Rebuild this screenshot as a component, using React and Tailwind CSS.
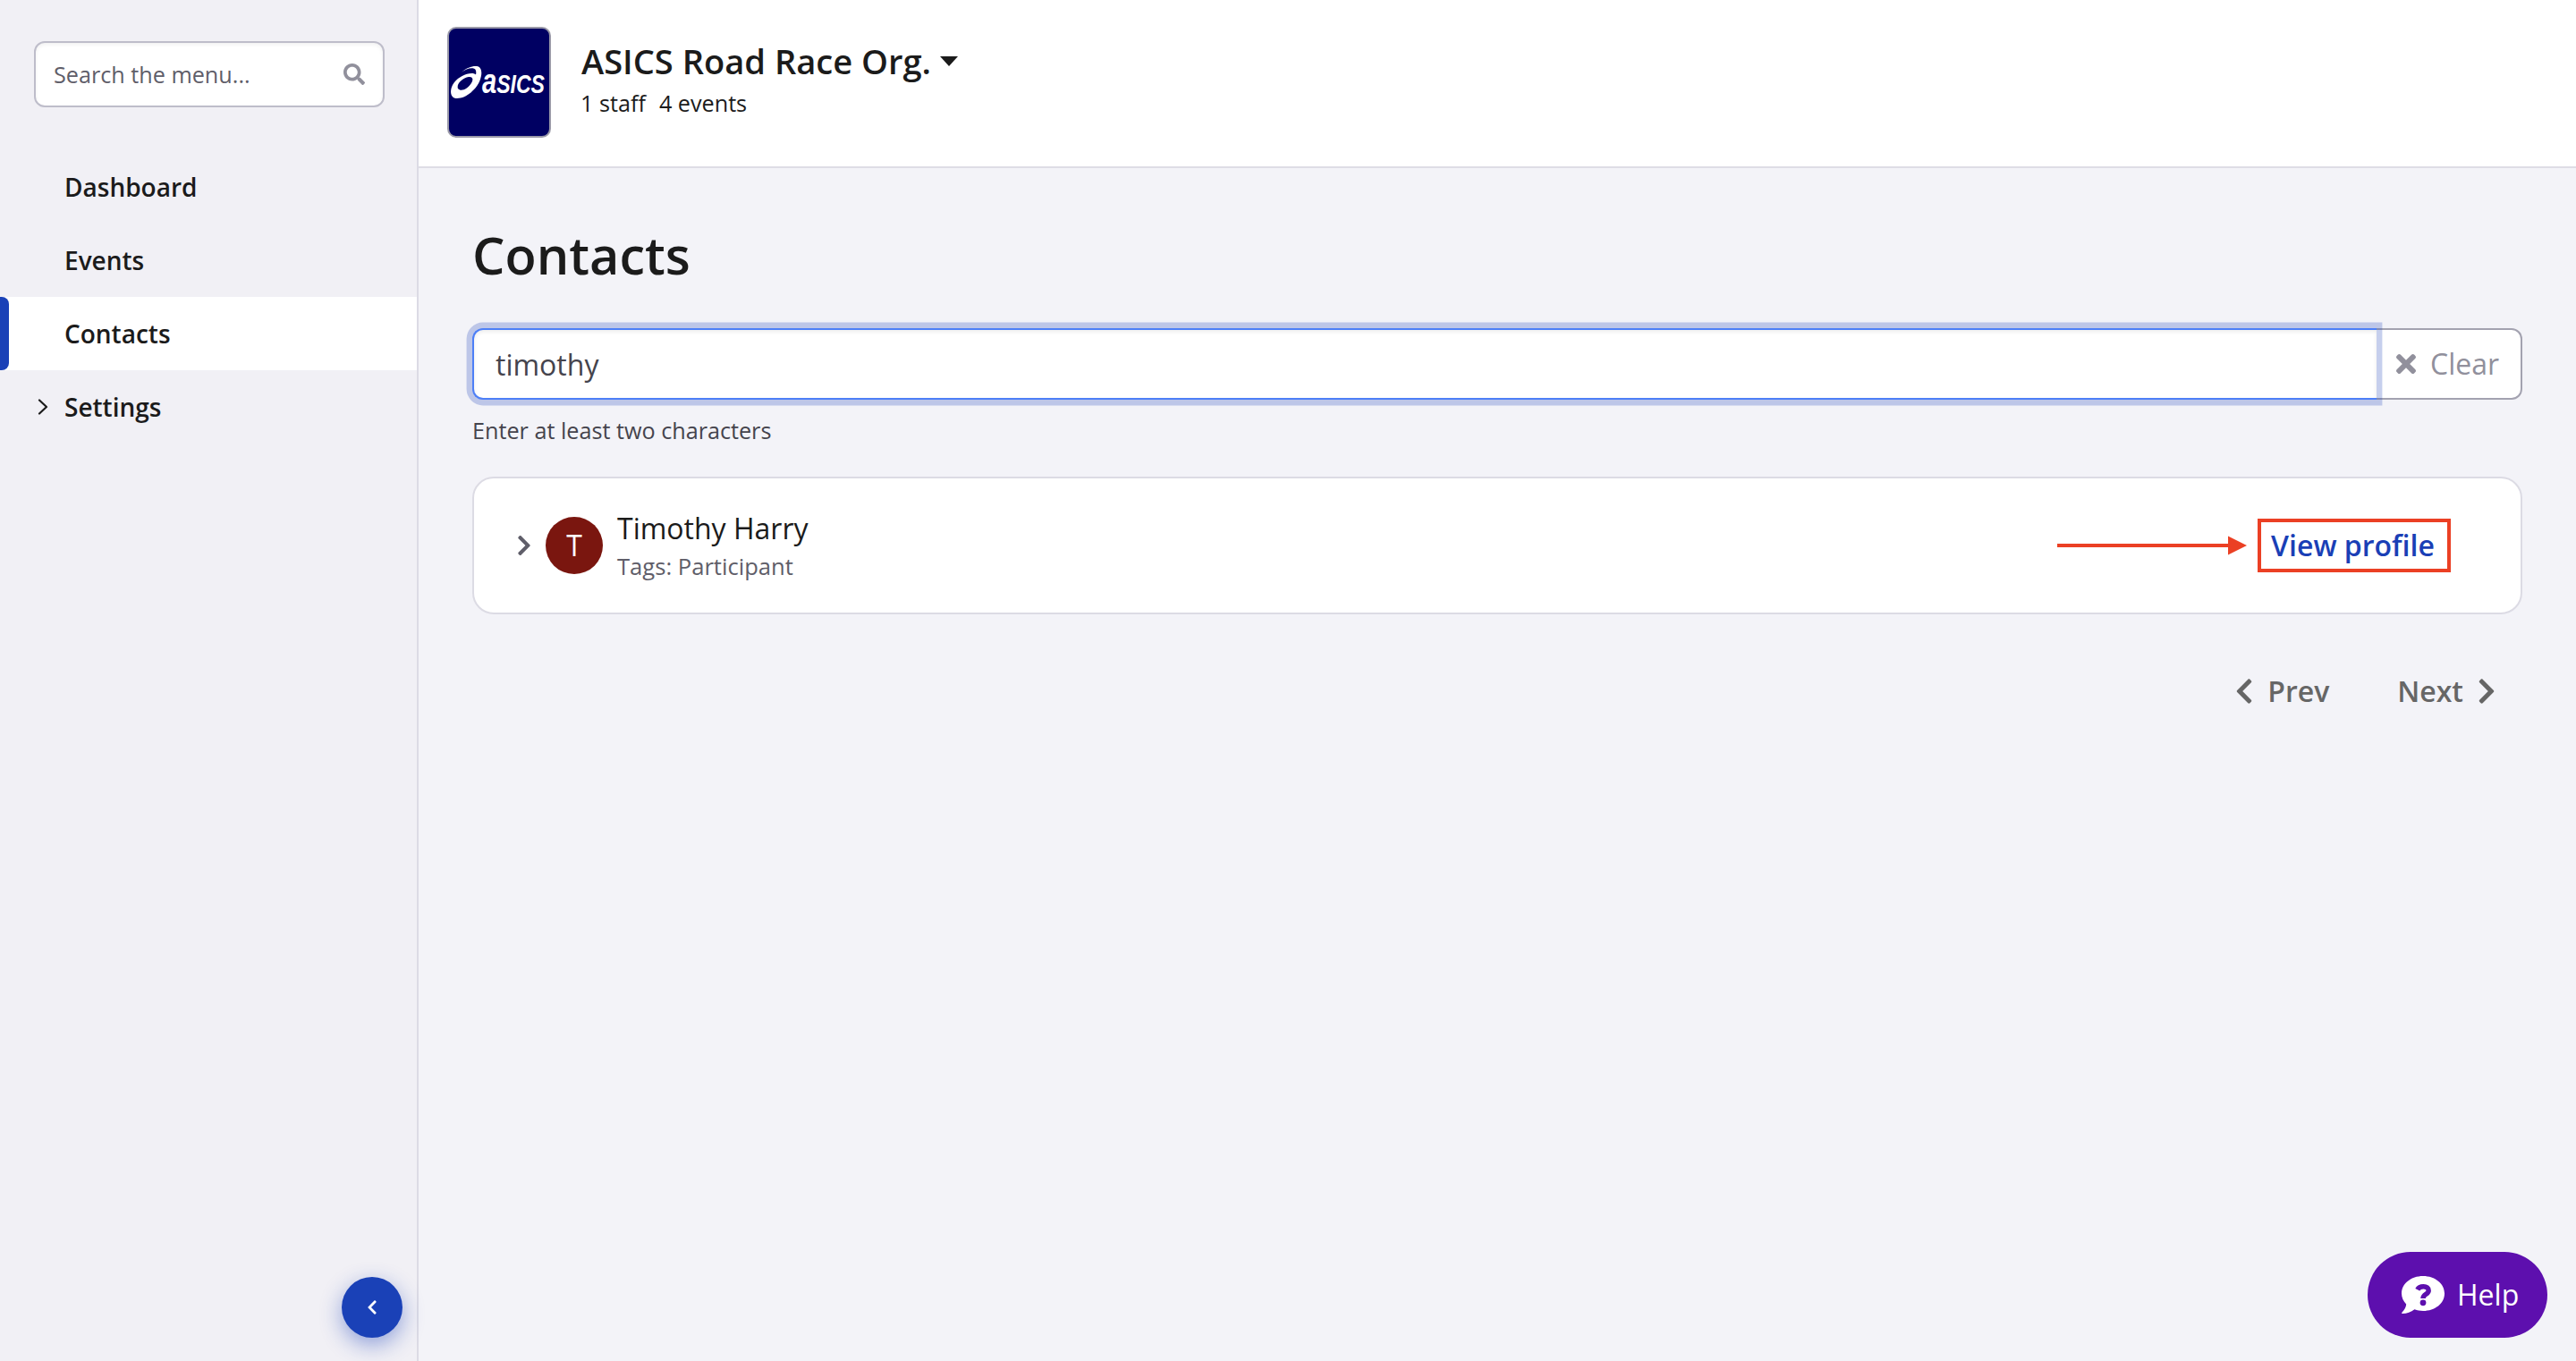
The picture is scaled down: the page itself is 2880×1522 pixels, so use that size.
import { FaChevronLeft, FaChevronRight, FaSearch, FaTimes } from 'react-icons/fa';

const navItems = [
  { label: 'Dashboard' },
  { label: 'Events' },
  { label: 'Contacts', active: true },
  { label: 'Settings', expandable: true },
];

const contacts = [{ name: 'Timothy Harry', initial: 'T', tags: 'Participant' }];

const AsicsLogo = () => (
  <svg viewBox="0 0 112 120" className="w-full h-full" role="img">
    <path
      fill="#fff"
      fillRule="evenodd"
      d="M14 48.7C20 43.5 26 41.5 31 42C37 43 37.5 50 34.5 58C31 67 20 78 9 78C1.5 78 .5 70 4 63C8 56 17 50 25.5 50C27.5 50 29 50.500 30 51.5C31 47 29.5 44.5 26.500 44.3C22 44 18 46 14 48.7ZM10 67C13 71 21 68 25.500 60C27.500 56 26 53.5 22 54C15 55 8 62 10 67Z"
    />
    <text
      x="37"
      y="72"
      fill="#fff"
      fontWeight="700"
      fontStyle="italic"
      fontSize="30"
      textLength="70"
      lengthAdjust="spacingAndGlyphs"
      className="font-['Liberation_Sans',sans-serif]"
    >
      <tspan fontSize="38">a</tspan>SICS
    </text>
  </svg>
);

const HelpIcon = () => (
  <svg viewBox="0 0 48 42" className="w-12 h-[42px]">
    <path
      fill="#fff"
      d="M24 0C37.500 0 48 8.500 48 19.500S37.500 39 24 39C20.500 39 17.500 38.500 14.500 37.300C10.500 40.500 6 42 1 42C0 42 0 41 .6 40.400C3.500 37.500 5 34.500 5.200 31.500C2 28 0 24 0 19.500C0 8.500 10.500 0 24 0Z"
    />
    <path
      fill="none"
      stroke="#5d0fae"
      strokeWidth="5.500"
      strokeLinejoin="round"
      d="M17.800 15.200C19 12.700 21.500 11.800 24.500 11.800C28 11.800 30.200 13.600 30.200 16.200C30.200 20.500 24 20 24 25"
    />
    <circle cx="24" cy="29.800" r="3.400" fill="#5d0fae" />
  </svg>
);

const Sidebar = () => (
  <aside className="w-[468px] shrink-0 flex flex-col bg-[#f1f0f5] border-r-2 border-[#dcdbe5]">
    <div className="mt-[46px] ml-[38px] w-[392px] h-[74px] flex items-center justify-between bg-white border-2 border-[#bebdca] rounded-xl pl-5 pr-5 shadow-[inset_0_2px_4px_rgba(0,0,0,0.06)]">
      <span className="pt-0.5 text-[25.2px] text-[#5f5e69]">Search the menu...</span>
      <FaSearch className="size-6 text-[#91909c]" />
    </div>

    <nav className="mt-12">
      {navItems.map((item) => (
        <div key={item.label} className={item.active ? 'flex items-center h-[82px] bg-white' : 'flex items-center h-[82px]'}>
          <div className={item.active ? 'w-2.5 h-full rounded-r-lg bg-[#1a41b7]' : 'w-2.5'} />
          <div className="w-[62px] flex items-center pl-8">
            {item.expandable && (
              <svg viewBox="0 0 12 18" className="w-3 h-[18px]" fill="none" stroke="#1b1b1b" strokeWidth="2.200" strokeLinecap="round" strokeLinejoin="round">
                <path d="M2 1.500L10 9L2 16.500" />
              </svg>
            )}
          </div>
          <span className="text-[28px] font-semibold text-[#1b1b1b]">{item.label}</span>
        </div>
      ))}
    </nav>

    <button className="mt-auto mb-[26px] mr-4 self-end size-[68px] rounded-full bg-[#1a41b7] flex items-center justify-center shadow-[0_8px_24px_rgba(26,65,183,0.45)]">
      <FaChevronLeft className="size-[18px] text-white" />
    </button>
  </aside>
);

const Header = () => (
  <header className="h-[188px] shrink-0 flex bg-white border-b-2 border-[#dedde5] pl-8 pt-[30px]">
    <div className="w-[116px] h-[124px] rounded-[10px] border-2 border-[#9a99a8] bg-[#000062] overflow-hidden">
      <AsicsLogo />
    </div>
    <div className="ml-[34px] text-[#1b1b1b]">
      <div className="flex items-center mt-[11px]">
        <h2 className="text-[38.1px] leading-[54px] font-semibold">ASICS Road Race Org.</h2>
        <svg viewBox="0 0 20 11" className="ml-2.5 w-5 h-[11px]">
          <path fill="#1b1b1b" d="M0 0H20L10 11Z" />
        </svg>
      </div>
      <div className="flex gap-[15px] text-[25.2px] leading-[40px] -ml-px">
        <span>1 staff</span>
        <span>4 events</span>
      </div>
    </div>
  </header>
);

const ContactCard = ({ contact }) => (
  <div className="mt-[34px] h-[154px] flex items-center bg-white border-2 border-[#dcdbe4] rounded-3xl pl-[47px] pr-[78px]">
    <FaChevronRight className="w-[18px] h-[26px] text-[#5f5e69]" />
    <div className="ml-[15px] size-16 rounded-full bg-[#7a160f] text-white text-[32px] flex items-center justify-center">
      {contact.initial}
    </div>
    <div className="ml-4">
      <div className="text-[32px] leading-[44px] text-[#1b1b1b]">{contact.name}</div>
      <div className="pt-0.5 -mb-0.5 text-[25.6px] leading-[38px] text-[#5f5e69]">Tags: {contact.tags}</div>
    </div>
    <svg viewBox="0 0 212 22" className="ml-auto mr-3 w-[212px] h-[22px]" fill="#eb4024">
      <path d="M0 9H191V0.500L212 11L191 21.500V13H0Z" />
    </svg>
    <a className="w-[216px] h-[60px] border-4 border-[#eb4024] flex items-center justify-center pr-[3px] text-[32px] font-semibold text-[#1a3fb6]">
      View profile
    </a>
  </div>
);

const App = () => (
  <div className="w-[2880px] h-[1522px] flex bg-[#f3f3f8] font-['Open_Sans',sans-serif]">
    <Sidebar />
    <div className="flex-1 flex flex-col">
      <Header />
      <main className="flex-1 flex flex-col pl-[60px] pr-[60px] pt-[57px]">
        <h1 className="text-[57.6px] leading-[80px] font-semibold text-[#1b1b1b]">Contacts</h1>

        {/* Search */}
        <div className="mt-[42px] h-20 flex">
          <div className="relative flex-1 flex items-center bg-white border-2 border-r-0 border-[#4d7ff7] rounded-l-xl pt-[2px] pl-6 text-[32px] text-[#45444d] shadow-[0_0_0_6.4px_rgba(26,65,183,0.25),inset_0_2px_4px_rgba(0,0,0,0.08)]">
            timothy
          </div>
          <button className="w-[163px] flex items-center bg-white border-2 border-l-0 border-[#a3a2b0] rounded-r-xl pl-[22px] text-[32px] text-[#91909c]">
            <FaTimes className="w-[22px] h-8 mr-4" />
            Clear
          </button>
        </div>
        <p className="mt-4 text-[25.2px] leading-[36px] text-[#45444d]">Enter at least two characters</p>

        {contacts.map((contact) => (
          <ContactCard key={contact.name} contact={contact} />
        ))}

        {/* Pagination */}
        <div className="mt-16 flex justify-end items-center text-[32px] leading-[44px] font-semibold text-[#666] pr-[30px]">
          <FaChevronLeft className="w-5 h-8 mr-4" />
          Prev
          <span className="ml-[76px]">Next</span>
          <FaChevronRight className="w-5 h-8 ml-4" />
        </div>

        <button className="mt-auto mb-[26px] -mr-7 self-end w-[201px] h-24 rounded-full bg-[#5d0fae] text-white text-[32px] font-medium flex items-center pl-[38px]">
          <HelpIcon />
          <span className="ml-3.5">Help</span>
        </button>
      </main>
    </div>
  </div>
);

export default App;
